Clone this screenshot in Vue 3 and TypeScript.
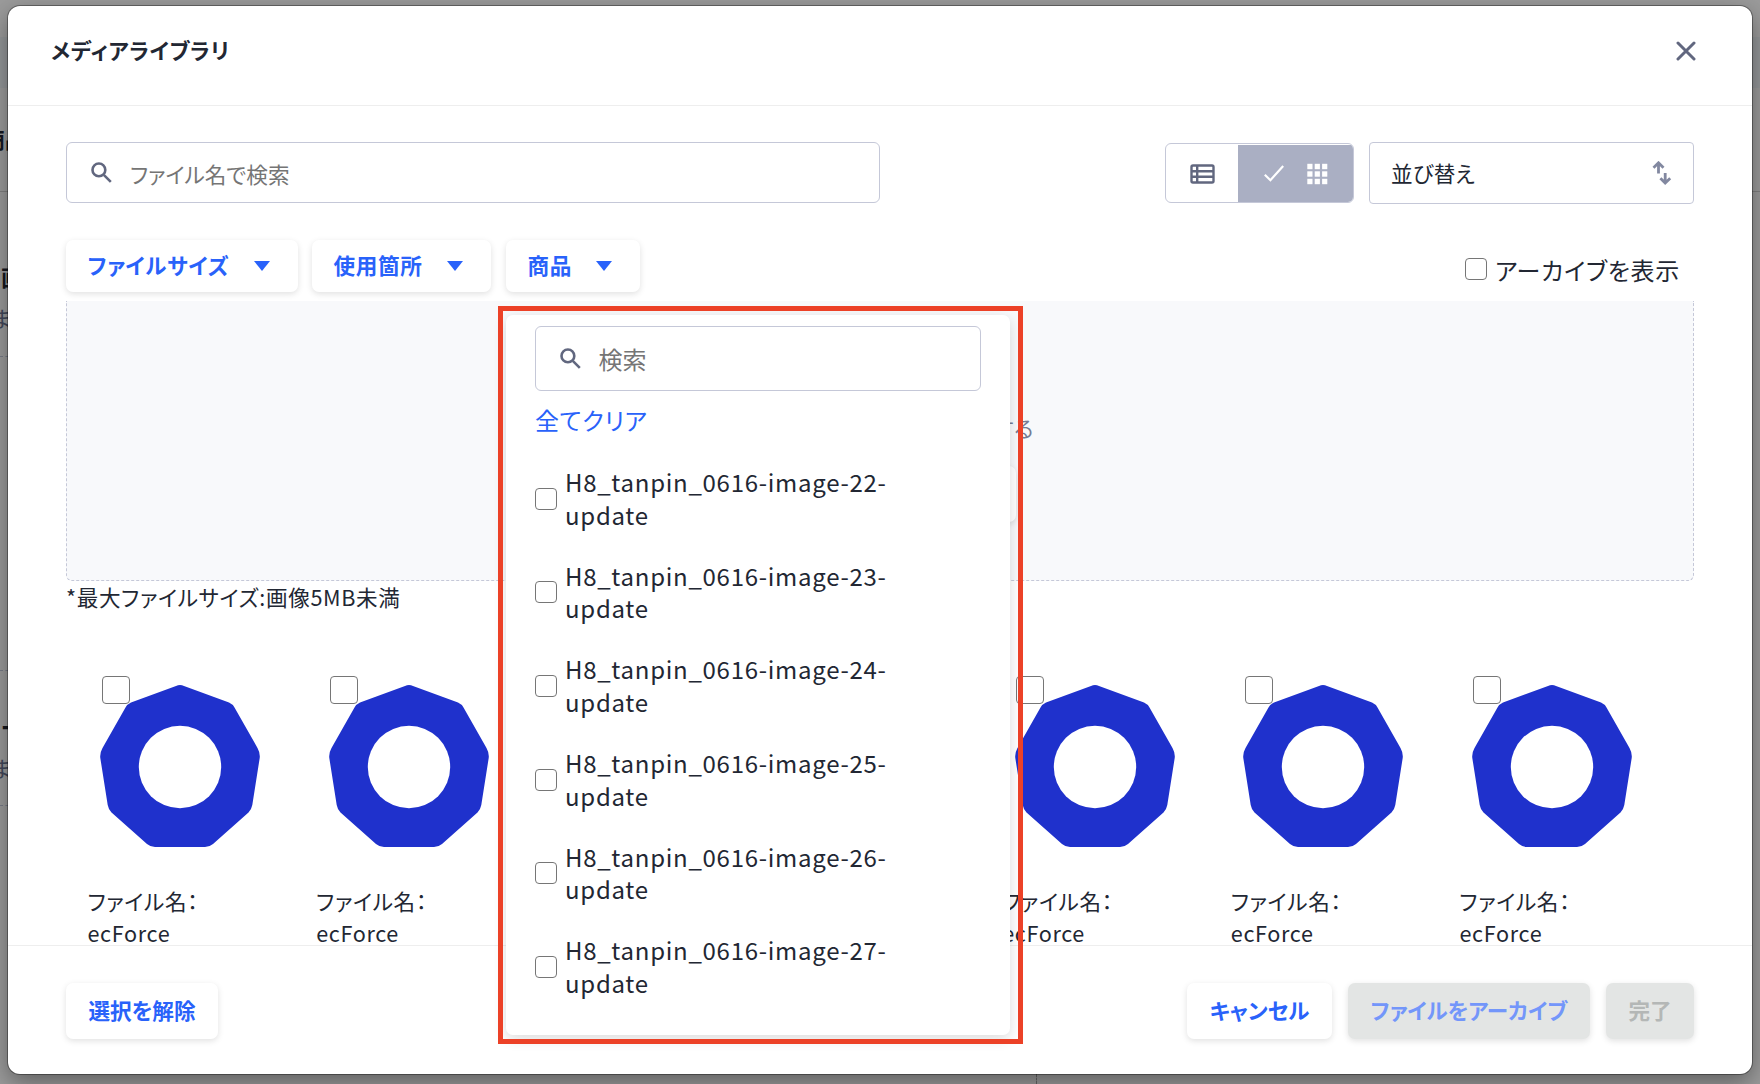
<script setup lang="ts">
const filters: string[] = ['ファイルサイズ', '使用箇所', '商品']
const products: string[] = [22, 23, 24, 25, 26, 27].map((n) => `H8_tanpin_0616-image-${n}-update`)
const files: string[] = Array.from({ length: 7 }, () => 'ecForce')
</script>

<template>
  <div class="page">
    <div class="behind">
      <div class="band"></div>
      <div class="rule r1"></div>
      <div class="rule r2 dashed"></div>
      <div class="rule r3 dashed"></div>
      <div class="rule r4 dashed"></div>
      <span class="bt b1">商品</span>
      <span class="bt b2">画</span>
      <span class="bt b3 soft">ま</span>
      <span class="bt b4">ー</span>
      <span class="bt b5 soft">ま</span>
      <div class="vline"></div>
    </div>

    <section class="modal">
      <header class="head">
        <h1>メディアライブラリ</h1>
        <svg class="close" viewBox="0 0 20 20"><path d="M2 2 18 18M18 2 2 18" /></svg>
      </header>

      <main class="body">
        <div class="toolbar">
          <div class="search">
            <svg class="mag" viewBox="0 0 21 21"><circle cx="7.9" cy="7.9" r="6.4" /><path d="M12.8 12.8 19.8 19.8" /></svg>
            <span>ファイル名で検索</span>
          </div>
          <div class="tools">
            <div class="toggle">
              <div class="cell">
                <svg width="25" height="20" viewBox="0 0 25 20" class="list">
                  <rect x="1.5" y="1.5" width="22" height="17" rx="1.5" />
                  <path d="M1.5 7.2H23.5M1.5 12.8H23.5M7.2 1.5V18.5" />
                </svg>
              </div>
              <div class="cell on">
                <svg width="20" height="17" viewBox="0 0 20 17" class="check"><path d="M.8 9.8 6.4 15.2 19.2 1" /></svg>
                <svg width="21" height="24" viewBox="0 0 21 24" class="grid">
                  <template v-for="r in 3" :key="r">
                    <rect v-for="c in 3" :key="c" :x="(c - 1) * 7.4 + 0.3" :y="(r - 1) * 7.5 + 1.8" width="5.2" height="5.4" />
                  </template>
                </svg>
              </div>
            </div>
            <div class="select">
              <span>並び替え</span>
              <svg width="20" height="24" viewBox="0 0 20 24" class="sort">
                <path d="M6.5 12.5V2.5M1.5 6.8 6.5 1.8 11.5 6.8M13.2 12V21.5M8.4 17.2 13.2 22 18.2 17.2" />
              </svg>
            </div>
          </div>
        </div>

        <div class="filters">
          <button v-for="f in filters" :key="f" class="btn filter">
            <span>{{ f }}</span><i></i>
          </button>
          <label class="archive"><span class="box"></span><span>アーカイブを表示</span></label>
        </div>

        <div class="drop">
          <span class="hint">する</span>
          <div class="pick"></div>
        </div>
        <p class="note">*最大ファイルサイズ:画像5MB未満</p>

        <div class="files">
          <article v-for="(name, i) in files" :key="i" class="file">
            <div class="thumb">
              <svg width="162" height="164" viewBox="-81 -83 162 164">
                <path
                  d="M-4 -81Q0 -82.8 4 -81L49 -64.5Q52.5 -63 54.5 -59.5L77.5 -19Q80.3 -14 79.7 -9L72.3 38Q71.5 42.5 68.5 45.5L33 77Q29.5 80 25 80H-25Q-29.5 80 -33 77L-68.5 45.5Q-71.5 42.5 -72.3 38L-79.7 -9Q-80.3 -14 -77.5 -19L-54.5 -59.5Q-52.5 -63 -49 -64.5Z"
                />
                <circle r="41.2" />
              </svg>
              <span class="box big"></span>
            </div>
            <p>ファイル名：<br />{{ name }}</p>
          </article>
        </div>
      </main>

      <footer class="foot">
        <button class="btn">選択を解除</button>
        <span class="grow"></span>
        <button class="btn cancel">キャンセル</button>
        <button class="btn arch">ファイルをアーカイブ</button>
        <button class="btn done">完了</button>
      </footer>
    </section>

    <aside class="popup">
      <div class="search small">
        <svg class="mag" viewBox="0 0 21 21"><circle cx="7.9" cy="7.9" r="6.4" /><path d="M12.8 12.8 19.8 19.8" /></svg>
        <span>検索</span>
      </div>
      <a class="clear">全てクリア</a>
      <label v-for="p in products" :key="p" class="opt">
        <span class="box"></span>
        <span>{{ p }}</span>
      </label>
    </aside>
    <div class="marker"></div>
  </div>
</template>

<style>
html,
body {
  margin: 0;
  overflow: hidden;
}
</style>

<style scoped>
* {
  box-sizing: border-box;
}
.page {
  position: relative;
  width: 1760px;
  height: 1084px;
  padding: 6px 8px 10px;
  background: #9b9b9b;
  overflow: hidden;
  color: #222733;
  font-family: 'Noto Sans CJK JP', 'Noto Sans', sans-serif;
  font-size: 21.6px;
  letter-spacing: 0.65px;
  font-feature-settings: 'palt';
}
.behind {
  position: absolute;
  inset: 0;
}
.band {
  position: absolute;
  top: 37px;
  left: 0;
  right: 0;
  height: 51px;
  background: #949799;
}
.rule {
  position: absolute;
  left: 0;
  right: 0;
  border-top: 1px solid #808080;
}
.rule.dashed {
  right: auto;
  width: 30px;
  border-top: 1px dashed #777b87;
}
.r1 {
  top: 191px;
}
.r2 {
  top: 356px;
}
.r3 {
  top: 670px;
}
.r4 {
  top: 805px;
}
.bt {
  position: absolute;
  font-size: 22px;
  line-height: 30px;
  font-weight: 700;
  letter-spacing: 0;
  white-space: nowrap;
  color: #15171f;
}
.bt.soft {
  font-weight: 400;
  color: #42485a;
}
.b1 {
  left: -17px;
  top: 123px;
}
.b2 {
  left: 1px;
  top: 261px;
}
.b3 {
  left: -9px;
  top: 302px;
}
.b4 {
  left: 1px;
  top: 711px;
}
.b5 {
  left: -9px;
  top: 752px;
}
.vline {
  position: absolute;
  left: 1036px;
  bottom: 0;
  height: 10px;
  border-left: 1px dashed #666;
}
.modal {
  position: relative;
  height: 1068px;
  display: flex;
  flex-direction: column;
  background: #fff;
  border-radius: 12px;
  box-shadow: 0 0 0 1px rgba(0, 0, 0, 0.35), 0 8px 24px rgba(0, 0, 0, 0.4);
}
.head {
  flex: none;
  height: 100px;
  padding: 0 56px 10px 43px;
  display: flex;
  align-items: center;
  justify-content: space-between;
  border-bottom: 1px solid #eee;
}
h1 {
  margin: -2px 0 0;
  font-size: inherit;
  font-weight: 700;
}
.close {
  width: 20px;
  height: 20px;
}
.close path {
  fill: none;
  stroke: #61677f;
  stroke-width: 3;
  stroke-linecap: round;
}
.body {
  height: 839px;
  padding: 36px 58px 0;
  overflow: hidden;
}
.toolbar {
  display: flex;
  justify-content: space-between;
}
.search {
  width: 814px;
  height: 61px;
  padding-left: 24px;
  display: flex;
  align-items: center;
  border: 1px solid #c5c8d8;
  border-radius: 6px;
  background: #fff;
  color: #757575;
  letter-spacing: 0;
}
.search span {
  margin: 2px 0 0 18px;
}
.mag {
  flex: none;
  width: 21px;
  height: 21px;
}
.mag circle,
.mag path {
  fill: none;
  stroke: #61677f;
  stroke-width: 2.6;
}
.tools {
  display: flex;
  align-items: flex-start;
  gap: 15px;
}
.toggle {
  width: 189px;
  height: 60px;
  margin-top: 1px;
  padding-top: 1px;
  display: flex;
  border: 1px solid #c5c8d8;
  border-radius: 6px;
  overflow: hidden;
}
.cell {
  width: 72px;
  padding-left: 2px;
  display: flex;
  align-items: center;
  justify-content: center;
}
.cell.on {
  width: 116px;
  gap: 23px;
  background: #aaafc3;
}
.list * {
  fill: none;
  stroke: #61677f;
  stroke-width: 2.4;
}
.check path {
  fill: none;
  stroke: #fff;
  stroke-width: 2.2;
}
.grid rect {
  fill: #fff;
}
.select {
  width: 325px;
  height: 62px;
  padding: 0 21px;
  display: flex;
  align-items: center;
  justify-content: space-between;
  border: 1px solid #c5c8d8;
  border-radius: 4px;
  letter-spacing: 0.1px;
}
.select span {
  margin-top: -2px;
}
.sort path {
  fill: none;
  stroke: #8288a0;
  stroke-width: 2.8;
}
.btn {
  height: 56px;
  padding: 0 21px 3px;
  border: 0;
  border-radius: 7px;
  background: #fff;
  box-shadow: 0 2px 6px rgba(0, 0, 0, 0.12);
  color: #2962fa;
  font: inherit;
  font-weight: 700;
  letter-spacing: 0;
  white-space: nowrap;
}
.filters {
  height: 61px;
  margin-top: 36px;
  display: flex;
}
.filter {
  height: 52px;
  padding-left: 21.5px;
  display: flex;
  align-items: center;
  letter-spacing: 0.65px;
}
.filter:nth-child(1) {
  width: 232px;
  margin-right: 14px;
}
.filter:nth-child(2) {
  width: 179px;
  margin-right: 15px;
}
.filter:nth-child(3) {
  width: 134px;
}
.filter i {
  margin-left: auto;
  margin-right: 7px;
  margin-top: 3px;
  border: 8.5px solid transparent;
  border-top: 10px solid #2962fa;
  border-bottom: 0;
}
.archive {
  margin: 12px 14px 0 auto;
  height: 34px;
  display: flex;
  align-items: center;
  font-size: 24px;
  letter-spacing: 0.72px;
}
.box {
  flex: none;
  width: 22px;
  height: 22px;
  margin-right: 8px;
  border: 1.5px solid #767676;
  border-radius: 4px;
  background: #fff;
}
.drop {
  position: relative;
  height: 280px;
  border: 1px dashed #c5c8d8;
  border-top: 0;
  border-radius: 0 0 6px 6px;
  background: #f8f9fb;
}
.hint {
  position: absolute;
  right: 659px;
  top: 111px;
  color: #757c94;
}
.pick {
  position: absolute;
  left: 678px;
  top: 165px;
  width: 271px;
  height: 56px;
  border-radius: 7px;
  background: #fff;
  box-shadow: 0 2px 6px rgba(0, 0, 0, 0.12);
}
.note {
  margin: 0;
  line-height: 32px;
}
.files {
  display: grid;
  grid-template-columns: repeat(7, 228.67px);
  margin-top: 52px;
  padding-left: 22px;
}
.thumb {
  position: relative;
  height: 215px;
  padding: 19px 0 0 11px;
}
.thumb path {
  fill: #1f31cc;
}
.thumb circle {
  fill: #fff;
}
.box.big {
  position: absolute;
  left: 13.5px;
  top: 10.5px;
  width: 28px;
  height: 28px;
}
.file p {
  margin: 5px 0 0 -0.5px;
  line-height: 32.4px;
}
.foot {
  flex: none;
  height: 129px;
  padding: 37px 58px 0;
  display: flex;
  align-items: flex-start;
  border-top: 1px solid #eee;
}
.grow {
  flex: 1;
}
.foot .btn:first-child {
  width: 152px;
}
.foot .cancel {
  width: 145px;
  margin-right: 16px;
}
.foot .arch {
  width: 242px;
  margin-right: 16px;
  background: #e3e5e4;
  color: #7396fa;
}
.foot .done {
  width: 88px;
  background: #e3e5e4;
  color: #b4b7b6;
}
.popup {
  position: absolute;
  left: 506px;
  top: 315px;
  width: 504px;
  height: 720px;
  padding: 11px 29px 0;
  border-radius: 7px;
  background: #fff;
  box-shadow: 0 4px 14px rgba(0, 0, 0, 0.14);
  font-size: 24px;
}
.small {
  width: 446px;
  height: 65px;
}
.small span {
  margin: 0 0 0 17.5px;
}
.clear {
  display: block;
  height: 62px;
  margin-top: 13px;
  line-height: 32px;
  color: #2962fa;
  letter-spacing: 0.6px;
}
.opt {
  display: flex;
  align-items: center;
  width: 400px;
  height: 65px;
  margin-bottom: 28.7px;
  line-height: 32.5px;
  letter-spacing: 0.72px;
}
.opt span:last-child {
  width: 340px;
}
.marker {
  position: absolute;
  left: 498px;
  top: 306px;
  width: 525px;
  height: 738px;
  border: 5px solid #ec4127;
}
</style>
